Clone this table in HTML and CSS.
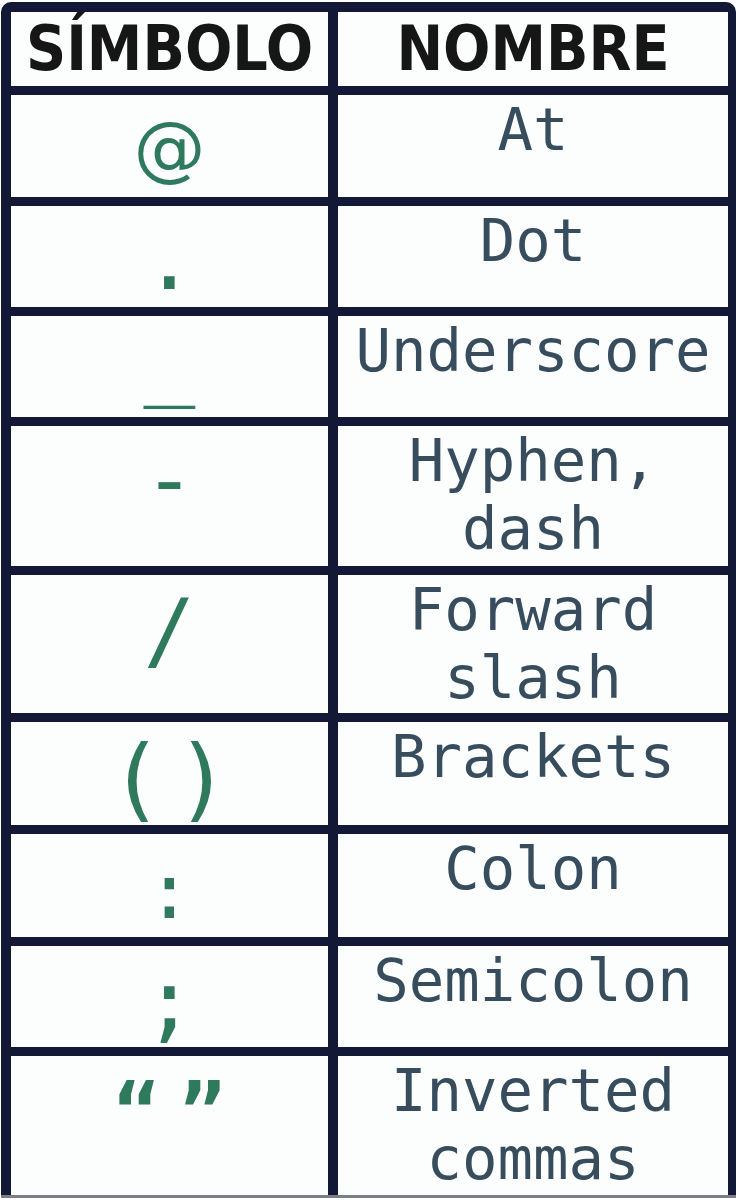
FILE: index.html
```html
<!DOCTYPE html>
<html lang="es">
<head>
<meta charset="utf-8">
<title>Símbolos</title>
<link rel="stylesheet" href="styles.css">
</head>
<body>
<div class="frame">
  <div class="table">
    <div class="cell head">SÍMBOLO</div>
    <div class="cell head">NOMBRE</div>

    <div class="cell sym sym--at">@</div>
    <div class="cell name">At</div>

    <div class="cell sym">.</div>
    <div class="cell name">Dot</div>

    <div class="cell sym sym--under">_</div>
    <div class="cell name">Underscore</div>

    <div class="cell sym">-</div>
    <div class="cell name">Hyphen,<br>dash</div>

    <div class="cell sym sym--slash">/</div>
    <div class="cell name">Forward<br>slash</div>

    <div class="cell sym sym--paren">()</div>
    <div class="cell name">Brackets</div>

    <div class="cell sym sym--colon">:</div>
    <div class="cell name">Colon</div>

    <div class="cell sym sym--slash">;</div>
    <div class="cell name">Semicolon</div>

    <div class="cell sym sym--quote">“”</div>
    <div class="cell name">Inverted<br>commas</div>
  </div>
</div>
</body>
</html>
```
FILE: styles.css
```css
html, body {
  margin: 0;
  padding: 0;
  background: #ffffff;
}

body {
  width: 736px;
  height: 1200px;
  overflow: hidden;
}

.frame {
  margin: 2px 0 0 1px;
  background: #131836;
  border-radius: 10px 10px 0 0;
  padding: 10px 8px 0 10px;
  border-bottom: 3px solid #7a7e88;
}

.table {
  display: grid;
  grid-template-columns: 317px 390px;
  grid-template-rows: 74px 102px 101px 101px 140px 138px 103px 103px 101px 139px;
  column-gap: 10px;
  row-gap: 9px;
}

.cell {
  background: #fcfefe;
  text-align: center;
}

.head {
  font-family: "DejaVu Sans Condensed", "DejaVu Sans", sans-serif;
  font-stretch: condensed;
  font-weight: 700;
  font-size: 62px;
  line-height: 74px;
  color: #161616;
}

.name {
  font-family: "DejaVu Sans Mono", monospace;
  font-size: 59px;
  line-height: 68px;
  color: #374d5e;
  padding-top: 1px;
}

.sym {
  font-family: "DejaVu Sans Mono", monospace;
  font-size: 86px;
  line-height: 86px;
  color: #2f7a5d;
  padding-top: 10px;
}

.sym--at {
  font-family: "DejaVu Sans", sans-serif;
  font-size: 72px;
  padding-top: 10px;
}
.sym--under { padding-top: 0; }
.sym--slash { padding-top: 12px; }
.sym--paren {
  font-size: 90px;
  line-height: 90px;
  padding-top: 12px;
  padding-left: 12px;
  letter-spacing: 12px;
}
.sym--colon {
  font-size: 76px;
  line-height: 76px;
  padding-top: 20px;
}
.sym--quote {
  font-weight: 700;
  font-size: 76px;
  line-height: 76px;
  padding-top: 18px;
  padding-left: 20px;
  letter-spacing: 20px;
}
```
